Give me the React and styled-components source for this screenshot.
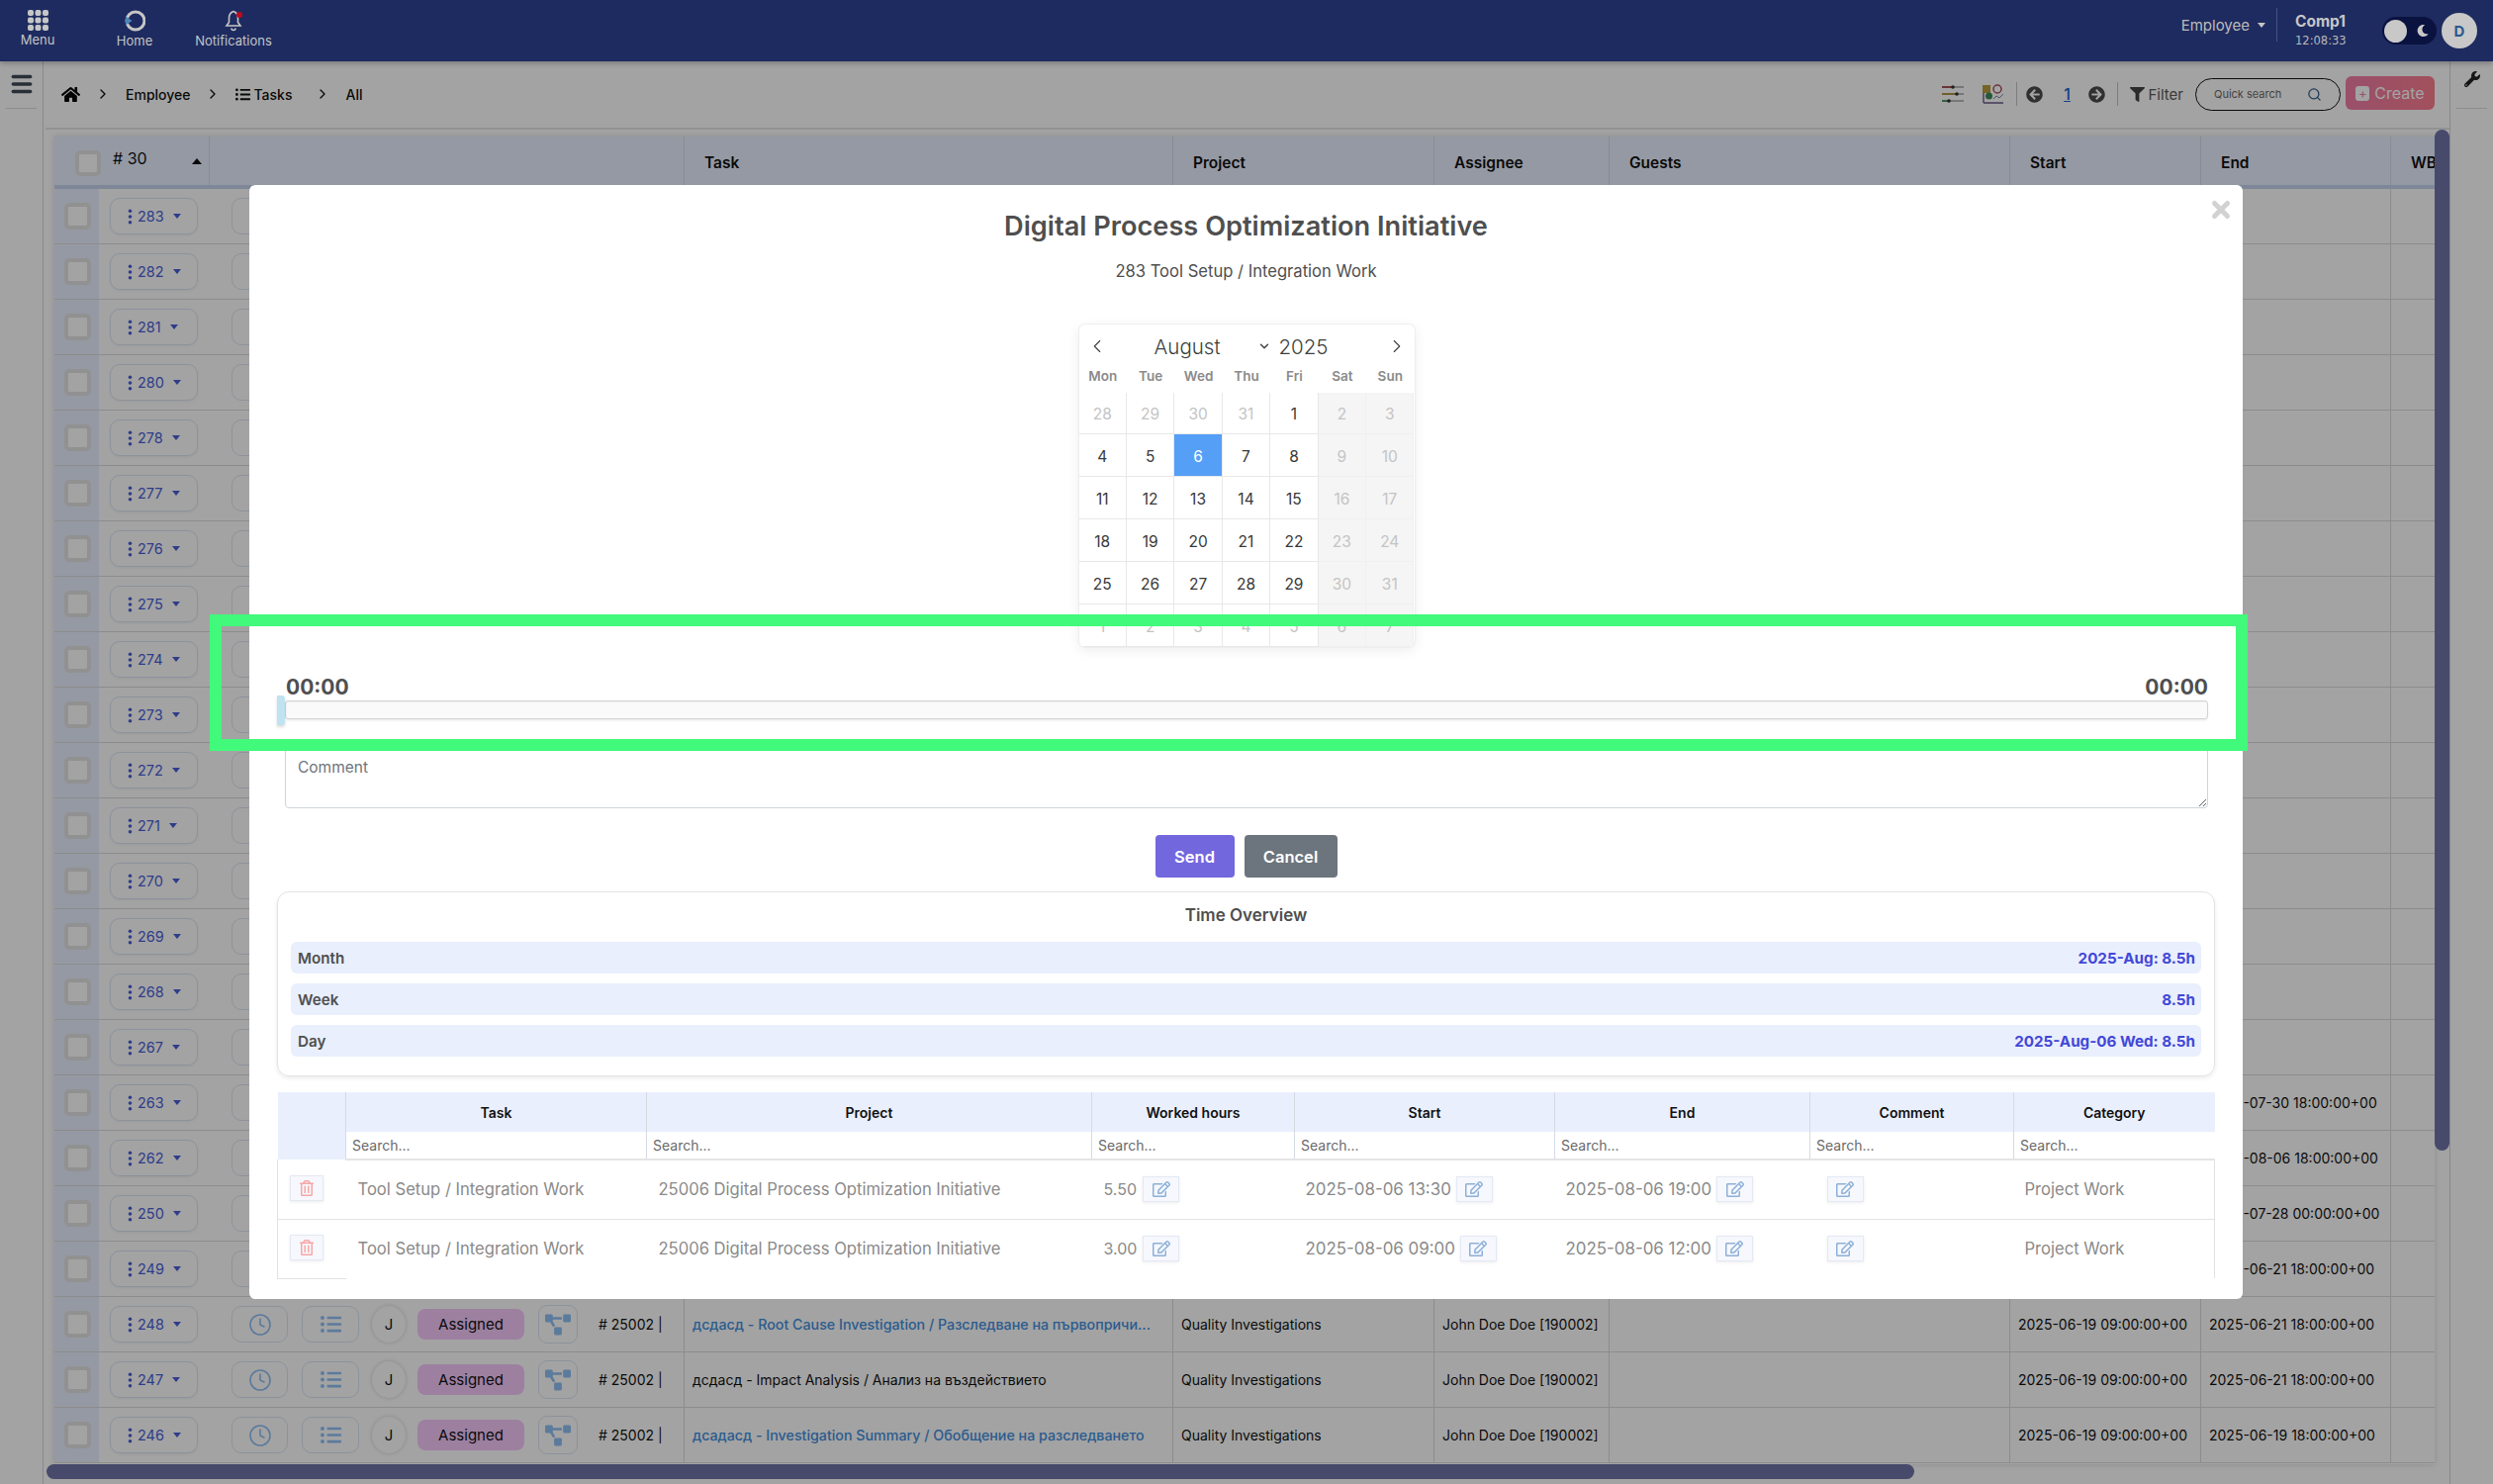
import styled, { createGlobalStyle } from "styled-components";
import {
  ChevronDown,
  ChevronLeft,
  ChevronRight,
  Clock,
  Menu as MenuIcon,
  Search,
  X,
} from "lucide-react";
import {
  FaArrowCircleLeft,
  FaArrowCircleRight,
  FaFilter,
  FaHome,
  FaListUl,
  FaMoon,
  FaProjectDiagram,
  FaRegEdit,
  FaRegTrashAlt,
  FaWrench,
} from "react-icons/fa";

const GlobalStyle = createGlobalStyle`
  html, body {
    margin: 0;
    padding: 0;
    background: #fff;
    overflow: hidden;
  }
  * {
    box-sizing: border-box;
  }
  body {
    font-family: Inter, "Liberation Sans", sans-serif;
  }
`;

const rows = [
  { id: 283 }, { id: 282 }, { id: 281 }, { id: 280 }, { id: 278 }, { id: 277 },
  { id: 276 }, { id: 275 }, { id: 274 }, { id: 273 }, { id: 272 }, { id: 271 },
  { id: 270 }, { id: 269 }, { id: 268 }, { id: 267 },
  { id: 263, end: "2025-07-30 18:00:00+00" },
  { id: 262, end: "2025-08-06 18:00:00+00" },
  { id: 250, end: "2025-07-28 00:00:00+00" },
  { id: 249, end: "2025-06-21 18:00:00+00" },
  {
    id: 248,
    title: "дсдасд - Root Cause Investigation / Разследване на първопричи...",
    link: true,
    start: "2025-06-19 09:00:00+00",
    end: "2025-06-21 18:00:00+00",
  },
  {
    id: 247,
    title: "дсдасд - Impact Analysis / Анализ на въздействието",
    start: "2025-06-19 09:00:00+00",
    end: "2025-06-21 18:00:00+00",
  },
  {
    id: 246,
    title: "дсадасд - Investigation Summary / Обобщение на разследването",
    link: true,
    start: "2025-06-19 09:00:00+00",
    end: "2025-06-19 18:00:00+00",
  },
];

const weekdays = ["Mon", "Tue", "Wed", "Thu", "Fri", "Sat", "Sun"];
const calendarDays = [
  28, 29, 30, 31, 1, 2, 3, 4, 5, 6, 7, 8, 9, 10, 11, 12, 13, 14, 15, 16, 17, 18,
  19, 20, 21, 22, 23, 24, 25, 26, 27, 28, 29, 30, 31, 1, 2, 3, 4, 5, 6, 7,
];

const overview = [
  { label: "Month", value: "2025-Aug: 8.5h" },
  { label: "Week", value: "8.5h" },
  { label: "Day", value: "2025-Aug-06 Wed: 8.5h" },
];

const worked = [
  { hours: "5.50", start: "2025-08-06 13:30", end: "2025-08-06 19:00" },
  { hours: "3.00", start: "2025-08-06 09:00", end: "2025-08-06 12:00" },
];

const workedColumns = ["Task", "Project", "Worked hours", "Start", "End", "Comment", "Category"];

const rowIconColor = "#8fc0f5";
const rowIdColor = "#4a5fd8";

export default function App() {
  return (
    <>
      <GlobalStyle />
      <Page>
        <TopBar>
          <NavItem $width={68}>
            <svg width="21" height="21" viewBox="0 0 21 21" fill="#c6c6c6">
              {[0, 7.5, 15].map((y) =>
                [0, 7.5, 15].map((x) => (
                  <rect key={`${x}-${y}`} x={x} y={y} width="6" height="6" rx="2" />
                )),
              )}
            </svg>
            <span>Menu</span>
          </NavItem>
          <NavItem $width={68} $left={30}>
            <svg width="22" height="22" viewBox="0 0 22 22" fill="none">
              <circle cx="12" cy="11" r="9" stroke="#c6c6c6" strokeWidth="3" />
              <path d="M2 6.500l6.500 4.500-6.500 4.500z" fill="#4c86b8" />
            </svg>
            <span>Home</span>
          </NavItem>
          <NavItem $width={82} $left={25}>
            <BellWrap>
              <svg width="20" height="22" viewBox="0 0 20 22" fill="none" stroke="#c6c6c6" strokeWidth="1.6">
                <path d="M10 1.5c-3 1-4.500 4-4.500 7v4L3 16h14l-2.500-3.500v-4c0-3-1.500-6-4.500-7z" />
                <path d="M8 18.500a2 2 0 0 0 4 0" />
              </svg>
              <BellDot />
            </BellWrap>
            <span>Notifications</span>
          </NavItem>
          <TopBarRight>
            <RoleSelect>
              Employee <Caret $color="#c6c6c6" />
            </RoleSelect>
            <CompanyBlock>
              <strong>Comp1</strong>
              <span>12:08:33</span>
            </CompanyBlock>
            <ThemeToggle>
              <ToggleKnob />
              <FaMoon size={12} color="#c8c8c8" />
            </ThemeToggle>
            <Avatar>D</Avatar>
          </TopBarRight>
        </TopBar>

        <Body>
          <SideRail>
            <RailButton>
              <MenuIcon size={26} strokeWidth={3.2} color="#3f4a56" />
            </RailButton>
          </SideRail>

          <Content>
            <Toolbar>
              <Breadcrumbs>
                <FaHome size={19} color="#050505" />
                <ChevronRight size={16} />
                <span>Employee</span>
                <ChevronRight size={16} />
                <CrumbIcon>
                  <FaListUl size={15} />
                  <span>Tasks</span>
                </CrumbIcon>
                <ChevronRight size={16} />
                <span>All</span>
              </Breadcrumbs>
              <Tools>
                <svg width="22" height="18" viewBox="0 0 22 18" fill="none" strokeWidth="1.6">
                  <path d="M0 2h22" stroke="#aaa" />
                  <path d="M0 2h12" stroke="#a33a3a" />
                  <circle cx="11" cy="2" r="1.800" fill="#333" />
                  <path d="M0 9h22" stroke="#aaa" />
                  <path d="M0 9h15" stroke="#b08a2c" />
                  <circle cx="15" cy="9" r="1.800" fill="#333" />
                  <path d="M0 16h22" stroke="#aaa" />
                  <path d="M0 16h6" stroke="#3c8a5a" />
                  <circle cx="7" cy="16" r="1.800" fill="#333" />
                </svg>
                <ChartIcon>
                  <svg width="22" height="20" viewBox="0 0 22 20">
                    <rect x="0" y="1" width="8" height="8" fill="#b79d39" />
                    <circle cx="15" cy="5" r="4" fill="none" stroke="#a8505f" strokeWidth="1.500" />
                    <circle cx="6.500" cy="12" r="3.500" fill="#3c8a5a" />
                    <path d="M1 19h20M1 9v10" stroke="#6a5a8c" strokeWidth="1.400" fill="none" />
                    <path d="M11 15l3-3 3 2 4-4" stroke="#7b8aa0" strokeWidth="1" fill="none" />
                  </svg>
                </ChartIcon>
                <ToolDivider />
                <FaArrowCircleLeft size={17} color="#4b4b4b" />
                <PageNumber>1</PageNumber>
                <FaArrowCircleRight size={17} color="#4b4b4b" />
                <ToolDivider />
                <FilterButton>
                  <FaFilter size={15} color="#444" />
                  Filter
                </FilterButton>
                <QuickSearch>
                  <span>Quick search</span>
                  <Search size={15} color="#2e5c86" />
                </QuickSearch>
                <CreateButton>
                  <PlusBox>+</PlusBox>
                  Create
                </CreateButton>
              </Tools>
            </Toolbar>

            <TableWrap>
              <HeadRow>
                <HeadFirst>
                  <HeadCheck />
                  <span># 30</span>
                  <SortArrow />
                </HeadFirst>
                <HeadCell $width={480} />
                <HeadCell $width={494}>Task</HeadCell>
                <HeadCell $width={264}>Project</HeadCell>
                <HeadCell $width={177}>Assignee</HeadCell>
                <HeadCell $width={405}>Guests</HeadCell>
                <HeadCell $width={193}>Start</HeadCell>
                <HeadCell $width={192}>End</HeadCell>
                <HeadCell $width={60}>WB</HeadCell>
              </HeadRow>
              {rows.map((row) => (
                <Row key={row.id}>
                  <CheckCell>
                    <Check />
                  </CheckCell>
                  <ActionCell>
                    <IdButton>
                      <svg width="5" height="16" viewBox="0 0 5 16" fill={rowIdColor}>
                        <circle cx="2.500" cy="2.200" r="1.800" />
                        <circle cx="2.500" cy="8" r="1.800" />
                        <circle cx="2.500" cy="13.800" r="1.800" />
                      </svg>
                      <IdNumber>{row.id}</IdNumber>
                      <Caret $color={rowIdColor} />
                    </IdButton>
                    <IconButton $width={57} $left={34}>
                      <Clock size={24} color={rowIconColor} strokeWidth={1.600} />
                    </IconButton>
                    <IconButton $width={58} $left={14}>
                      <FaListUl size={21} color={rowIconColor} />
                    </IconButton>
                    <Initial>J</Initial>
                    <StatusPill>Assigned</StatusPill>
                    <TreeButton>
                      <FaProjectDiagram size={26} color={rowIconColor} />
                    </TreeButton>
                    <ProjectCode># 25002 |</ProjectCode>
                  </ActionCell>
                  <TitleCell $link={row.link}>{row.title}</TitleCell>
                  <DataCell $width={264}>{row.title && "Quality Investigations"}</DataCell>
                  <DataCell $width={177}>{row.title && "John Doe Doe [190002]"}</DataCell>
                  <DataCell $width={405} />
                  <DataCell $width={193}>{row.start}</DataCell>
                  <DataCell $width={192}>{row.end}</DataCell>
                  <DataCell $width={60} />
                </Row>
              ))}
            </TableWrap>
            <HorizontalScroll />
            <VerticalScroll />
          </Content>

          <SideRail $right>
            <RailButton>
              <FaWrench size={16} color="#222" />
            </RailButton>
          </SideRail>
        </Body>

        <Backdrop />

        <Modal>
          <CloseButton>
            <X size={26} strokeWidth={4.6} />
          </CloseButton>
          <ModalTitle>Digital Process Optimization Initiative</ModalTitle>
          <ModalSubtitle>283 Tool Setup / Integration Work</ModalSubtitle>

          <Calendar>
            <MonthBar>
              <ChevronLeft size={22} strokeWidth={1.200} />
              <MonthName>
                <span>August</span>
                <ChevronDown size={14} strokeWidth={2.400} />
              </MonthName>
              <span>2025</span>
              <NextMonth>
                <ChevronRight size={22} strokeWidth={1.200} />
              </NextMonth>
            </MonthBar>
            <WeekdayRow>
              {weekdays.map((day) => (
                <span key={day}>{day}</span>
              ))}
            </WeekdayRow>
            <DayGrid>
              {calendarDays.map((day, i) => (
                <Day
                  key={i}
                  $weekend={i % 7 >= 5}
                  $muted={i < 4 || i >= 35 || i % 7 >= 5}
                  $selected={i === 9}
                >
                  {day}
                </Day>
              ))}
            </DayGrid>
          </Calendar>

          <TimeLabels>
            <span>00:00</span>
            <span>00:00</span>
          </TimeLabels>
          <SliderTrack>
            <SliderHandle />
          </SliderTrack>

          <CommentBox placeholder="Comment" />

          <Actions>
            <PrimaryButton>Send</PrimaryButton>
            <SecondaryButton>Cancel</SecondaryButton>
          </Actions>

          <OverviewCard>
            <OverviewTitle>Time Overview</OverviewTitle>
            <OverviewList>
              {overview.map((item) => (
                <OverviewRow key={item.label}>
                  <span>{item.label}</span>
                  <OverviewValue>{item.value}</OverviewValue>
                </OverviewRow>
              ))}
            </OverviewList>
          </OverviewCard>

          <WorkedTable>
            <thead>
              <tr>
                <WorkedCorner rowSpan={2} />
                {workedColumns.map((col) => (
                  <WorkedHead key={col}>{col}</WorkedHead>
                ))}
              </tr>
              <tr>
                {workedColumns.map((col) => (
                  <WorkedSearch key={col}>Search...</WorkedSearch>
                ))}
              </tr>
            </thead>
            <tbody>
              {worked.map((item) => (
                <tr key={item.start}>
                  <TrashCell>
                    <SmallButton $wide={34}>
                      <FaRegTrashAlt size={16} color="#f7a6a6" />
                    </SmallButton>
                  </TrashCell>
                  <WorkedCell>Tool Setup / Integration Work</WorkedCell>
                  <WorkedCell>25006 Digital Process Optimization Initiative</WorkedCell>
                  <WorkedCell>
                    <CellLine>
                      {item.hours} <EditButton />
                    </CellLine>
                  </WorkedCell>
                  <WorkedCell>
                    <CellLine $date>
                      {item.start} <EditButton />
                    </CellLine>
                  </WorkedCell>
                  <WorkedCell>
                    <CellLine $date>
                      {item.end} <EditButton />
                    </CellLine>
                  </WorkedCell>
                  <WorkedCell $center>
                    <CellLine>
                      <EditButton />
                    </CellLine>
                  </WorkedCell>
                  <WorkedCell>Project Work</WorkedCell>
                </tr>
              ))}
            </tbody>
          </WorkedTable>
        </Modal>

        <Highlight />
      </Page>
    </>
  );
}

function EditButton() {
  return (
    <SmallButton $wide={37}>
      <FaRegEdit size={18} color="#8db0d8" />
    </SmallButton>
  );
}

const Page = styled.div`
  position: relative;
  width: 2520px;
  height: 1500px;
  overflow: hidden;
  background: #fff;
  display: flex;
  flex-direction: column;
`;

const TopBar = styled.header`
  position: relative;
  z-index: 5;
  height: 62px;
  flex: none;
  background: #1e2b60;
  box-shadow: 0 2px 5px rgba(0, 0, 0, 0.25);
  display: flex;
  align-items: flex-start;
  padding-left: 4px;
`;

const NavItem = styled.div`
  width: ${(p) => p.$width}px;
  margin-left: ${(p) => p.$left || 0}px;
  height: 62px;
  padding-top: 10px;
  display: flex;
  flex-direction: column;
  align-items: center;
  gap: 1px;
  color: #c4c4c4;
  font-size: 13px;
  white-space: nowrap;
`;

const BellWrap = styled.div`
  position: relative;
  height: 22px;
`;

const BellDot = styled.i`
  position: absolute;
  top: 2px;
  right: 1px;
  width: 6px;
  height: 6px;
  border-radius: 50%;
  background: #c00a1c;
`;

const TopBarRight = styled.div`
  margin-left: auto;
  display: flex;
  align-items: center;
  height: 62px;
  padding-right: 16px;
`;

const RoleSelect = styled.div`
  display: flex;
  align-items: center;
  gap: 8px;
  padding-right: 11px;
  height: 34px;
  border-right: 1px solid #46527f;
  color: #bcbcbc;
  font-size: 15px;
  margin-top: -12px;
`;

const CompanyBlock = styled.div`
  width: 106px;
  padding-left: 18px;
  display: flex;
  flex-direction: column;
  gap: 3px;
  color: #c6c6c6;
  margin-top: -2px;

  strong {
    font-size: 15.5px;
    font-weight: 700;
  }
  span {
    font-family: "DejaVu Sans", sans-serif;
    font-size: 11.5px;
    color: #b8b8b8;
  }
`;

const ThemeToggle = styled.div`
  width: 55px;
  height: 28px;
  border-radius: 14px;
  background: #0a1240;
  display: flex;
  align-items: center;
  justify-content: space-between;
  padding: 0 8px 0 2px;
`;

const ToggleKnob = styled.i`
  width: 23px;
  height: 23px;
  border-radius: 50%;
  background: #c8c8c8;
`;

const Avatar = styled.div`
  width: 36px;
  height: 36px;
  margin-left: 5px;
  border-radius: 50%;
  background: #c8c8c8;
  color: #2a5a8c;
  font-size: 15px;
  font-weight: 700;
  display: flex;
  align-items: center;
  justify-content: center;
`;

const Caret = styled.i`
  display: inline-block;
  width: 0;
  height: 0;
  border-left: 4px solid transparent;
  border-right: 4px solid transparent;
  border-top: 5px solid ${(p) => p.$color};
`;

const Body = styled.div`
  flex: 1;
  min-height: 0;
  display: flex;
  background: #fff;
`;

const SideRail = styled.aside`
  width: 44px;
  flex: none;
  background: #fff;
  border-${(p) => (p.$right ? "left" : "right")}: 1px solid #d6d6d6;
  padding: 10px 6px 0;
`;

const RailButton = styled.div`
  height: 38px;
  display: flex;
  justify-content: center;
  border-bottom: 1px solid #dcdcdc;
`;

const Content = styled.main`
  position: relative;
  flex: 1;
  min-width: 0;
  display: flex;
  flex-direction: column;
`;

const Toolbar = styled.div`
  height: 69px;
  flex: none;
  border-bottom: 2px solid #e4e4e4;
  display: flex;
  align-items: center;
  justify-content: space-between;
  padding: 0 15px 0 16px;
  margin-left: 2px;
`;

const Breadcrumbs = styled.nav`
  display: flex;
  align-items: center;
  gap: 15px;
  color: #111;
  font-size: 14px;
  font-weight: 500;
  margin-top: -1px;
`;

const CrumbIcon = styled.span`
  display: flex;
  align-items: center;
  gap: 3px;
  margin-right: 8px;
`;

const Tools = styled.div`
  display: flex;
  align-items: center;
  margin-top: -1px;
`;

const ChartIcon = styled.span`
  display: flex;
  margin-left: 19px;
`;

const ToolDivider = styled.i`
  width: 1px;
  height: 24px;
  margin: 0 9px 0 12px;
  background: #c4c4c4;
`;

const PageNumber = styled.span`
  width: 46px;
  padding-left: 4px;
  text-align: center;
  color: #1b62d6;
  font-size: 16px;
  font-weight: 500;
  text-decoration: underline;
`;

const FilterButton = styled.span`
  display: flex;
  align-items: center;
  gap: 4px;
  margin-left: 3px;
  color: #5a5a5a;
  font-size: 15px;
`;

const QuickSearch = styled.div`
  width: 147px;
  height: 33px;
  margin-left: 12px;
  border: 1.5px solid #111;
  border-radius: 17px;
  padding: 0 18px;
  display: flex;
  align-items: center;
  justify-content: space-between;
  color: #6a6a6a;
  font-size: 11px;
`;

const CreateButton = styled.div`
  width: 90px;
  height: 34px;
  margin: -2px 0 0 5px;
  border-radius: 6px;
  background: linear-gradient(90deg, #f17da8, #fd7e90);
  color: #fff;
  font-size: 16px;
  display: flex;
  align-items: center;
  justify-content: center;
  gap: 5px;
`;

const PlusBox = styled.span`
  width: 14px;
  height: 15px;
  border-radius: 3px;
  background: #fff;
  color: #f17da8;
  font-size: 13px;
  line-height: 15px;
  text-align: center;
`;

const TableWrap = styled.div`
  margin: 7px 15px 0 11px;
  height: 1342px;
  overflow: hidden;
  box-shadow: 0 0 6px rgba(0, 0, 0, 0.15);
`;

const HeadRow = styled.div`
  display: flex;
  height: 53px;
  background: #e9f0ff;
  border-bottom: 4px solid #c6d4ee;
`;

const HeadFirst = styled.div`
  width: 157px;
  flex: none;
  display: flex;
  align-items: center;
  gap: 12px;
  padding: 0 7px 0 21px;
  border-right: 1px solid #d4dbe8;
  font-size: 16px;
  color: #111;

  span {
    margin-top: -5px;
  }
`;

const SortArrow = styled.i`
  margin-left: auto;
  width: 0;
  height: 0;
  border-left: 5px solid transparent;
  border-right: 5px solid transparent;
  border-bottom: 6px solid #111;
`;

const HeadCell = styled.div`
  width: ${(p) => p.$width}px;
  flex: none;
  padding: 4px 0 0 20px;
  display: flex;
  align-items: center;
  border-right: 1px solid #d4dbe8;
  font-size: 15.5px;
  font-weight: 600;
  color: #111;
  white-space: nowrap;
`;

const Row = styled.div`
  display: flex;
  height: 56px;
  border-bottom: 1px solid #dcdcdc;
`;

const Check = styled.i`
  width: 27px;
  height: 27px;
  flex: none;
  border-radius: 5px;
  border: 4px solid #e3e3e3;
  background: #fff;
`;

const HeadCheck = styled(Check)`
  width: 26px;
  height: 26px;
  margin-top: 5px;
`;

const CheckCell = styled.div`
  width: 45px;
  flex: none;
  background: #e9f0ff;
  display: flex;
  align-items: center;
  justify-content: center;
  padding-left: 1px;
`;

const ActionCell = styled.div`
  width: 592px;
  flex: none;
  display: flex;
  align-items: center;
  padding-left: 11px;
  border-right: 1px solid #dcdcdc;
`;

const IdButton = styled.div`
  width: 89px;
  height: 37px;
  flex: none;
  border: 1px solid #dce4f4;
  border-radius: 10px;
  display: flex;
  align-items: center;
  padding-left: 17px;
  color: #4a5fd8;
  font-size: 14.5px;
  box-shadow: 0 1px 3px rgba(0, 0, 0, 0.06);
`;

const IdNumber = styled.span`
  margin: 0 9px 0 5px;
`;

const IconButton = styled.div`
  width: ${(p) => p.$width}px;
  height: 37px;
  flex: none;
  margin-left: ${(p) => p.$left}px;
  border: 1px solid #dce4f4;
  border-radius: 10px;
  display: flex;
  align-items: center;
  justify-content: center;
`;

const Initial = styled.div`
  width: 34px;
  height: 37px;
  flex: none;
  margin-left: 13px;
  border-radius: 50%;
  background: #fff;
  box-shadow: 0 0 4px rgba(0, 0, 0, 0.18);
  color: #111;
  font-size: 15px;
  display: flex;
  align-items: center;
  justify-content: center;
`;

const StatusPill = styled.div`
  width: 108px;
  height: 31px;
  flex: none;
  margin-left: 12px;
  border-radius: 8px;
  background: #f6c8fb;
  color: #111;
  font-size: 15px;
  display: flex;
  align-items: center;
  justify-content: center;
`;

const TreeButton = styled.div`
  width: 40px;
  height: 39px;
  flex: none;
  margin-left: 14px;
  border: 1px solid #dce4f4;
  border-radius: 9px;
  display: flex;
  align-items: center;
  justify-content: center;
`;

const ProjectCode = styled.span`
  margin-left: 21px;
  color: #111;
  font-size: 14px;
  white-space: nowrap;
`;

const TitleCell = styled.div`
  width: 494px;
  flex: none;
  padding-left: 8px;
  display: flex;
  align-items: center;
  border-right: 1px solid #dcdcdc;
  color: ${(p) => (p.$link ? "#4490e0" : "#111")};
  font-size: ${(p) => (p.$link ? 14.25 : 14)}px;
  font-weight: ${(p) => (p.$link ? 500 : 400)};
  white-space: nowrap;
  overflow: hidden;
`;

const DataCell = styled.div`
  width: ${(p) => p.$width}px;
  flex: none;
  padding-left: 8px;
  display: flex;
  align-items: center;
  border-right: 1px solid #dcdcdc;
  color: #111;
  font-size: 14px;
  white-space: nowrap;
`;

const VerticalScroll = styled.i`
  position: absolute;
  top: 69px;
  right: 0;
  width: 15px;
  height: 1032px;
  border-radius: 8px;
  background: #6f74a8;
`;

const HorizontalScroll = styled.i`
  position: absolute;
  bottom: 5px;
  left: 3px;
  width: 1888px;
  height: 15px;
  border-radius: 8px;
  background: #6f74a8;
`;

const Backdrop = styled.div`
  position: absolute;
  inset: 62px 0 0;
  z-index: 2;
  background: rgba(0, 0, 0, 0.36);
`;

const Modal = styled.section`
  position: absolute;
  top: 187px;
  left: 252px;
  z-index: 3;
  width: 2015px;
  height: 1126px;
  padding: 22px 28px;
  border-radius: 6px;
  background: #fff;
  color: #4f4f4f;
  overflow: hidden;
  display: flex;
  flex-direction: column;
  align-items: center;
`;

const CloseButton = styled.div`
  position: absolute;
  top: 12px;
  right: 9px;
  color: #d2d2d2;
  display: flex;
`;

const ModalTitle = styled.h2`
  margin: 0;
  font-size: 27.2px;
  line-height: 40px;
  font-weight: 600;
  white-space: nowrap;
`;

const ModalSubtitle = styled.p`
  margin: 13px 0 0;
  font-size: 16.6px;
  line-height: 24px;
`;

const Calendar = styled.div`
  width: 339px;
  height: 326px;
  flex: none;
  margin: 42px 0 0 1px;
  border-radius: 6px;
  background: #fff;
  box-shadow: 0 0 1px 1px #eee, 0 3px 13px rgba(0, 0, 0, 0.08);
  overflow: hidden;
`;

const MonthBar = styled.div`
  height: 39px;
  padding: 5px 7px 0;
  display: flex;
  align-items: center;
  color: #3c3f40;
  font-size: 20.5px;
  font-weight: 300;
`;

const MonthName = styled.div`
  width: 118px;
  margin: 0 8px 0 47px;
  display: flex;
  align-items: center;
  justify-content: space-between;
`;

const NextMonth = styled.span`
  display: flex;
  margin-left: auto;
`;

const WeekdayRow = styled.div`
  height: 30px;
  padding-bottom: 4px;
  display: grid;
  grid-template-columns: repeat(7, 1fr);
  align-items: center;
  text-align: center;
  color: #8a8a8a;
  font-size: 13.5px;
  font-weight: 600;
`;

const DayGrid = styled.div`
  display: grid;
  grid-template-columns: repeat(7, 1fr);
  grid-template-rows: 42px repeat(5, 43px);
`;

const Day = styled.div`
  display: flex;
  align-items: center;
  justify-content: center;
  padding-top: 2px;
  border-right: 1px solid ${(p) => (p.$weekend ? "#f0f0f0" : "#e8e8e8")};
  border-bottom: 1px solid ${(p) => (p.$weekend ? "#f0f0f0" : "#e8e8e8")};
  background: ${(p) => (p.$selected ? "#569ff7" : p.$weekend ? "#f5f5f5" : "#fff")};
  color: ${(p) => (p.$selected ? "#fff" : p.$muted ? "#c4c4c4" : "#393939")};
  font-size: 15.5px;
`;

const TimeLabels = styled.div`
  align-self: stretch;
  margin: 27px 7px 0 9px;
  display: flex;
  justify-content: space-between;
  font-size: 21px;
  line-height: 27px;
  font-weight: 700;
  color: #4f4f4f;
`;

const SliderTrack = styled.div`
  position: relative;
  align-self: stretch;
  flex: none;
  height: 19px;
  margin: 0 7px 0 8px;
  border: 1px solid #d3d3d3;
  border-radius: 3px;
  background: #fafafa;
  box-shadow: inset 0 1px 1px #f0f0f0, 0 2px 3px -1px #e6e6e6;
`;

const SliderHandle = styled.i`
  position: absolute;
  top: -6px;
  left: -9px;
  width: 8px;
  height: 30px;
  border-radius: 0 3px 3px 0;
  background: #bfe3f0;
  box-shadow: 0 2px 3px rgba(0, 0, 0, 0.15);
`;

const CommentBox = styled.textarea`
  align-self: stretch;
  flex: none;
  height: 70px;
  margin: 20px 7px 0 8px;
  padding: 18px 12px 0;
  border: 1px solid #ced4da;
  border-radius: 4px;
  outline: none;
  font-family: Inter, "Liberation Sans", sans-serif;
  font-size: 15.5px;
  color: #444;

  &::placeholder {
    color: #6c757d;
  }
`;

const Actions = styled.div`
  display: flex;
  gap: 10px;
  margin-top: 27px;
`;

const PrimaryButton = styled.button`
  width: 80px;
  height: 43px;
  border: 0;
  border-radius: 4px;
  background: #7367de;
  color: #fff;
  font-family: inherit;
  font-size: 16.5px;
  font-weight: 600;
`;

const SecondaryButton = styled(PrimaryButton)`
  width: 94px;
  background: #6c757d;
`;

const OverviewCard = styled.div`
  align-self: stretch;
  flex: none;
  height: 187px;
  margin-top: 14px;
  padding: 0 13px;
  border: 1px solid #e3e3e3;
  border-radius: 12px;
  box-shadow: 0 2px 4px rgba(0, 0, 0, 0.08);
`;

const OverviewTitle = styled.h3`
  margin: 0;
  height: 50px;
  line-height: 47px;
  text-align: center;
  font-size: 17px;
  font-weight: 600;
`;

const OverviewList = styled.div`
  display: flex;
  flex-direction: column;
  gap: 10px;
`;

const OverviewRow = styled.div`
  height: 32px;
  padding: 0 6px 0 7px;
  border-radius: 6px;
  background: #e9effd;
  display: flex;
  align-items: center;
  justify-content: space-between;
  font-size: 15.2px;
  font-weight: 600;
`;

const OverviewValue = styled.span`
  color: #4347d8;
  font-weight: 700;
`;

const WorkedTable = styled.table`
  flex: none;
  align-self: stretch;
  width: 1959px;
  margin-top: 16px;
  border-collapse: collapse;
  table-layout: fixed;
`;

const WorkedCorner = styled.th`
  width: 69px;
  background: #e9effd;
  border-right: 1px solid #d6dae3;
`;

const WorkedHead = styled.th`
  height: 40px;
  padding: 0;
  background: #e9effd;
  border-right: 1px solid #d6dae3;
  font-size: 14px;
  font-weight: 600;
  color: #111;

  &:nth-of-type(2) { width: 304px; }
  &:nth-of-type(3) { width: 450px; }
  &:nth-of-type(4) { width: 205px; }
  &:nth-of-type(5) { width: 263px; }
  &:nth-of-type(6) { width: 258px; }
  &:nth-of-type(7) { width: 206px; }
  &:nth-of-type(8) { border-right: 0; }
`;

const WorkedSearch = styled.td`
  height: 28px;
  padding: 0 0 0 6px;
  border-right: 1px solid #d6dae3;
  border-bottom: 2px solid #e4e4e4;
  color: #6a6a6a;
  font-size: 14px;

  &:last-child {
    border-right: 0;
  }
`;

const TrashCell = styled.td`
  height: 60px;
  padding: 0 0 2px 12px;
  border-left: 1px solid #e2e2e2;
  border-bottom: 1px solid #e2e2e2;
`;

const WorkedCell = styled.td`
  padding: 0 0 0 ${(p) => (p.$center ? 17 : 12)}px;
  border-bottom: 1px solid #e2e2e2;
  color: #8a8a8a;
  font-size: 16.6px;
  white-space: nowrap;

  tr:last-child & {
    border-bottom: 0;
  }
  &:last-child {
    padding-left: 11px;
    border-right: 1px solid #e2e2e2;
  }
`;

const CellLine = styled.div`
  display: flex;
  align-items: center;
  gap: ${(p) => (p.$date ? 5 : 6)}px;
  margin-left: ${(p) => (p.$date ? -1 : 0)}px;
  font-size: ${(p) => (p.$date ? 16.9 : 16)}px;
`;

const SmallButton = styled.span`
  display: inline-flex;
  align-items: center;
  justify-content: center;
  width: ${(p) => p.$wide}px;
  height: 26px;
  vertical-align: middle;
  border: 1px solid #e4e9f4;
  background: #f6f8fd;
  box-shadow: 0 1px 3px rgba(0, 0, 0, 0.08);
`;

const Highlight = styled.div`
  position: absolute;
  top: 621px;
  left: 212px;
  z-index: 4;
  width: 2060px;
  height: 138px;
  border: 12px solid #41f97a;
  pointer-events: none;
`;
